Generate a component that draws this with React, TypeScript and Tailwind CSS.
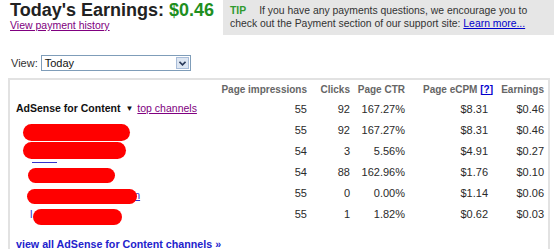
import React from "react";

type Row = {
  impressions: number;
  clicks: number;
  ctr: string;
  ecpm: string;
  earnings: string;
};

const rows: Row[] = [
  { impressions: 55, clicks: 92, ctr: "167.27%", ecpm: "$8.31", earnings: "$0.46" },
  { impressions: 55, clicks: 92, ctr: "167.27%", ecpm: "$8.31", earnings: "$0.46" },
  { impressions: 54, clicks: 3, ctr: "5.56%", ecpm: "$4.91", earnings: "$0.27" },
  { impressions: 54, clicks: 88, ctr: "162.96%", ecpm: "$1.76", earnings: "$0.10" },
  { impressions: 55, clicks: 0, ctr: "0.00%", ecpm: "$1.14", earnings: "$0.06" },
  { impressions: 55, clicks: 1, ctr: "1.82%", ecpm: "$0.62", earnings: "$0.03" },
];

// redaction marks drawn over the channel names
const blobs = [
  "left-[13px] top-[4px] w-[107px] h-[17px]",
  "left-[13px] top-[1px] w-[103px] h-[17px]",
  "left-[18px] top-[6px] w-[87px] h-[15px]",
  "left-[17px] top-[6px] w-[110px] h-[15px]",
  "left-[23px] top-[5px] w-[89px] h-[16px]",
];

const cols = "grid grid-cols-[200px_97px_43px_55px_88px_51px]";

function ChannelCell({ index }: { index: number }) {
  return (
    <div className="relative h-full">
      {index === 1 && (
        <span className="absolute left-[22px] top-[21px] w-[25px] h-px bg-[#3333cc]" />
      )}
      {index === 3 && (
        <span className="absolute left-[124px] top-[4px] text-[#3333cc] underline">n</span>
      )}
      {index === 4 && (
        <span className="absolute left-[20px] top-[2px] text-[#3333cc]">l</span>
      )}
      <span className={`absolute rounded-full bg-[#ff0000] ${blobs[index]}`} />
    </div>
  );
}

export default function App() {
  return (
    <div className="w-[554px] h-[249px] overflow-hidden bg-white font-['Liberation_Sans',Arial,sans-serif] text-[#333]">
      {/* Header + tip */}
      <div className="flex justify-between">
        <div className="pl-[10px]">
          <h1 className="text-[18px] leading-[20px] font-bold text-[#222]">
            Today's Earnings: <span className="text-[#1f8f1f]">$0.46</span>
          </h1>
          <a className="block text-[10.5px] leading-[11px] text-[#800080] underline">
            View payment history
          </a>
        </div>
        <div className="w-[331px] h-[35px] bg-[#e6e6e6] pl-[7px] pt-[4px] text-[10.4px] leading-[13px] text-[#333]">
          <span className="font-bold text-[#2e9a2e] mr-[13px]">TIP</span>
          If you have any payments questions, we encourage you to
          <br />
          check out the Payment section of our support site:{" "}
          <a className="text-[#0000cc] underline">Learn more...</a>
        </div>
      </div>

      {/* View selector */}
      <div className="mt-[20px] flex items-center pl-[11px] text-[11px]">
        <span className="text-[#333]">View:</span>
        <div className="ml-[3px] w-[150px] h-[16px] border border-[#7f9db9] bg-white flex items-center justify-between pl-[3px] pr-px">
          <span className="text-[#111]">Today</span>
          <span className="w-[13px] h-[12px] bg-[#dde6f2] border border-[#a8bcd8] flex items-center justify-center">
            <svg width="7" height="5" viewBox="0 0 7 5">
              <path d="M0.5 0.8 L3.5 3.8 L6.5 0.8" fill="none" stroke="#2a3a5a" strokeWidth="1.6" />
            </svg>
          </span>
        </div>
      </div>

      {/* Channel table */}
      <div className="mt-[6px] ml-[8px] w-[542px] border-2 border-[#e2e2e2] pb-[20px]">
        <div className={`${cols} h-[19px] items-center text-[10px] font-bold text-[#666] text-right`}>
          <span />
          <span>Page impressions</span>
          <span>Clicks</span>
          <span>Page CTR</span>
          <span>
            Page eCPM <a className="text-[#0000cc] underline">[?]</a>
          </span>
          <span>Earnings</span>
        </div>
        {rows.map((row, i) => (
          <div key={i} className={`${cols} h-[21px] items-center text-[11px] text-[#2a2a2a] text-right`}>
            {i === 0 ? (
              <div className="text-left pl-[6px] flex items-center">
                <span className="font-bold text-[10.5px] text-[#111]">AdSense for Content</span>
                <span className="ml-[5px] text-[8px] text-[#111]">▼</span>
                <a className="ml-[4px] text-[10.5px] text-[#800080] underline">top channels</a>
              </div>
            ) : (
              <ChannelCell index={i - 1} />
            )}
            <span>{row.impressions}</span>
            <span>{row.clicks}</span>
            <span>{row.ctr}</span>
            <span className="pr-[5px]">{row.ecpm}</span>
            <span>{row.earnings}</span>
          </div>
        ))}
        <a className="block mt-[11px] pl-[6px] text-[10.7px] font-bold text-[#2222cc] underline">
          view all AdSense for Content channels »
        </a>
      </div>
    </div>
  );
}
